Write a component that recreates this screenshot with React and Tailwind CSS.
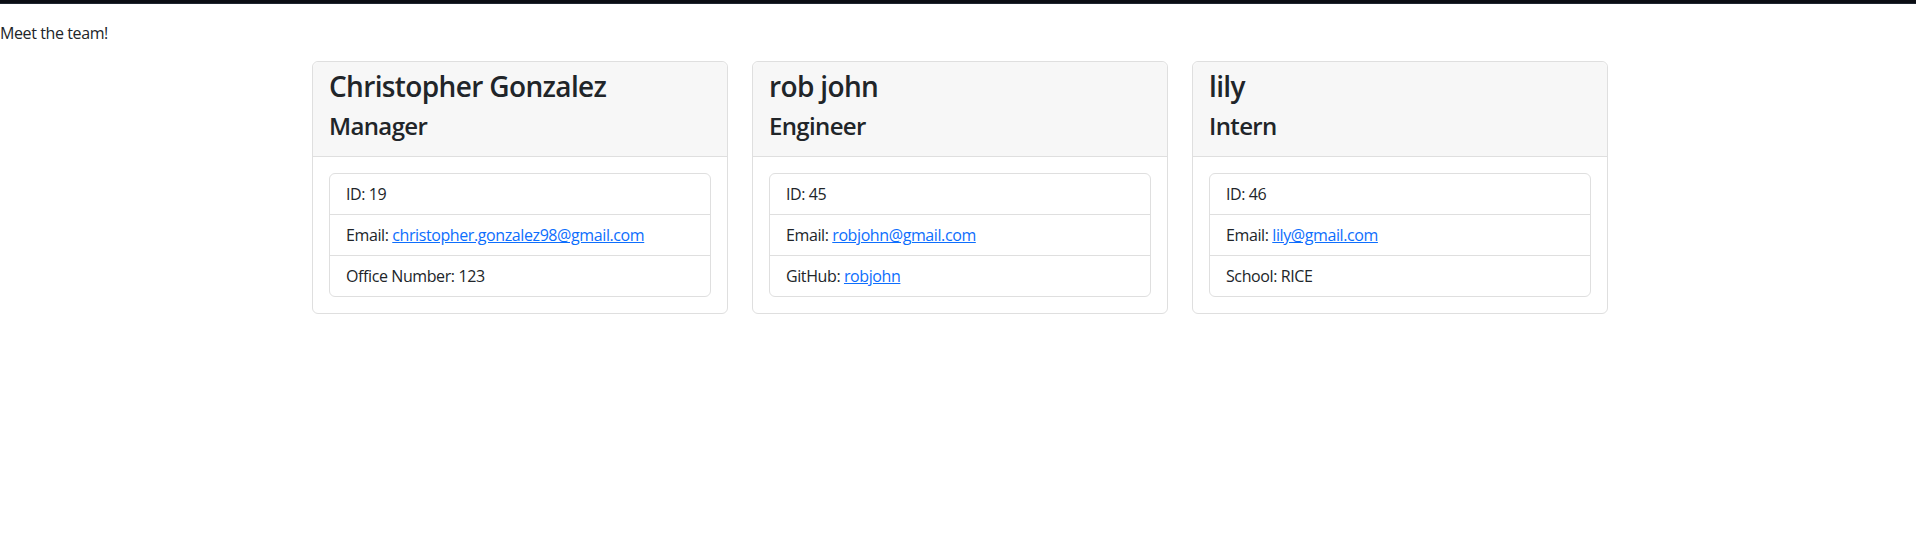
import React from 'react';

const team = [
  {
    name: 'Christopher Gonzalez',
    role: 'Manager',
    id: 19,
    email: 'christopher.gonzalez98@gmail.com',
    extra: { label: 'Office Number', value: '123' },
  },
  {
    name: 'rob john',
    role: 'Engineer',
    id: 45,
    email: 'robjohn@gmail.com',
    extra: { label: 'GitHub', value: 'robjohn', href: 'https://github.com/robjohn' },
  },
  {
    name: 'lily',
    role: 'Intern',
    id: 46,
    email: 'lily@gmail.com',
    extra: { label: 'School', value: 'RICE' },
  },
];

const EmployeeCard = ({ member }) => {
  return (
    <div className="w-[416px] rounded-md border border-[#dfdfdf] bg-white">
      {/* Header */}
      <div className="rounded-t-md border-b border-[#dfdfdf] bg-[#f7f7f7] px-4 py-2 tracking-[-0.04em]">
        <h3 className="mb-2 text-[28px] leading-[1.2] font-semibold">{member.name}</h3>
        <h4 className="mb-2 text-[24px] leading-[1.2] font-semibold">{member.role}</h4>
      </div>

      {/* Details */}
      <div className="p-4">
        <ul className="rounded-md border border-[#dfdfdf]">
          <li className="px-4 py-2 leading-6">ID: {member.id}</li>
          <li className="border-t border-[#dfdfdf] px-4 py-2 leading-6">
            Email:{' '}
            <a href={`mailto:${member.email}`} className="text-[#0d6efd] underline">
              {member.email}
            </a>
          </li>
          <li className="border-t border-[#dfdfdf] px-4 py-2 leading-6">
            {member.extra.label}:{' '}
            {member.extra.href ? (
              <a href={member.extra.href} className="text-[#0d6efd] underline">
                {member.extra.value}
              </a>
            ) : (
              member.extra.value
            )}
          </li>
        </ul>
      </div>
    </div>
  );
};

export default function App() {
  return (
    <div className="min-h-[554px] bg-white text-base tracking-[-0.025em] text-[#212529] font-['Open_Sans',sans-serif]">
      {/* Top bar */}
      <div className="h-[4px] border-b border-[#1f2630] bg-[#0a0d13]" />

      <p className="mt-[17px] mb-4 leading-6">Meet the team!</p>

      <div className="flex justify-center gap-6 pl-1">
        {team.map((member) => (
          <EmployeeCard key={member.id} member={member} />
        ))}
      </div>
    </div>
  );
}
